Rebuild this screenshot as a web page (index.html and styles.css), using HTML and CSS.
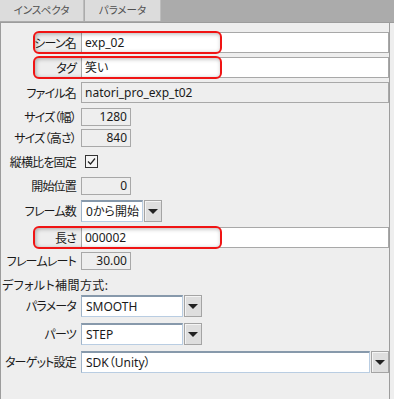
FILE: index.html
```html
<!DOCTYPE html>
<html lang="ja">
<head>
    <meta charset="UTF-8">
    <title>インスペクタ</title>
    <link rel="stylesheet" href="styles.css">
</head>
<body>
    <div class="tabs">
        <div class="tab tab-first">インスペクタ</div>
        <div class="tab tab-second">パラメータ</div>
    </div>

    <div class="panel">
        <div class="form">
            <div class="row r-wide">
                <span class="label">シーン名</span>
                <span class="field">exp_02</span>
                <span class="mark"></span>
            </div>
            <div class="row r-wide">
                <span class="label">タグ</span>
                <span class="field">笑い</span>
                <span class="mark"></span>
            </div>
            <div class="row r-wide r-gap5">
                <span class="label">ファイル名</span>
                <span class="field readonly">natori_pro_exp_t02</span>
            </div>
            <div class="row r-small">
                <span class="label">サイズ（幅）</span>
                <span class="field num">1280</span>
            </div>
            <div class="row r-small r-gap8">
                <span class="label">サイズ（高さ）</span>
                <span class="field num">840</span>
            </div>
            <div class="row r-check">
                <span class="label">縦横比を固定</span>
                <span class="checkbox">
                    <svg width="13" height="13" viewBox="0 0 13 13">
                        <rect x="0.5" y="0.5" width="12" height="12" fill="#f4f4f4" stroke="#333"/>
                        <path d="M3 6.5 L5.5 9 L10 3.5" fill="none" stroke="#222" stroke-width="1.2"/>
                    </svg>
                </span>
            </div>
            <div class="row r-small r-gap5">
                <span class="label">開始位置</span>
                <span class="field num">0</span>
            </div>
            <div class="row r-select r-gap5">
                <span class="label">フレーム数</span>
                <span class="select s-short">0から開始</span>
                <span class="arrow"></span>
            </div>
            <div class="row r-wide">
                <span class="label">長さ</span>
                <span class="field">000002</span>
                <span class="mark"></span>
            </div>
            <div class="row r-small r-gap7">
                <span class="label">フレームレート</span>
                <span class="field num">30.00</span>
            </div>
            <div class="heading">デフォルト補間方式:</div>
            <div class="row r-select r-gap6">
                <span class="label">パラメータ</span>
                <span class="select s-mid">SMOOTH</span>
                <span class="arrow"></span>
            </div>
            <div class="row r-select r-gap6">
                <span class="label">パーツ</span>
                <span class="select s-mid">STEP</span>
                <span class="arrow"></span>
            </div>
            <div class="row r-select">
                <span class="label">ターゲット設定</span>
                <span class="select s-long">SDK（Unity）</span>
                <span class="arrow"></span>
            </div>
        </div>
    </div>
</body>
</html>
```

FILE: styles.css
```css
body {
    margin: 0;
    background: #ababab;
    font-family: "Noto Sans", "Noto Sans CJK JP", sans-serif;
    font-size: 12px;
    font-feature-settings: "palt";
    color: #1a1a1a;
}

/* Tab strip */
.tabs {
    display: flex;
    height: 22px;
}

.tab {
    height: 21px;
    line-height: 21px;
    background: #dcdcdc;
    color: #505050;
    font-size: 10.5px;
    text-align: center;
    border-right: 1px solid #bdbdbd;
}

.tab-first {
    width: 83px;
}

.tab-second {
    width: 75px;
    margin-left: 1px;
}

/* Inspector panel */
.panel {
    background: #eeeeee;
    border-top: 1px solid #9c9c9c;
    height: 376px;
}

.form {
    width: 390px;
    height: 100%;
    box-sizing: border-box;
    padding-top: 9px;
    border-left: 1px solid #9c9c9c;
    border-right: 1px solid #9c9c9c;
}

.row {
    display: flex;
    align-items: center;
    position: relative;
    margin-bottom: 4px;
}

.r-wide { height: 21px; }
.r-small { height: 18px; margin-bottom: 3px; }
.r-select { height: 22px; }
.r-check { height: 13px; margin-top: 5px; margin-bottom: 9px; }

.r-gap5 { margin-bottom: 5px; }
.r-gap6 { margin-bottom: 6px; }
.r-gap7 { margin-bottom: 7px; }
.r-gap8 { margin-bottom: 8px; }

.label {
    width: 80px;
    flex: none;
    box-sizing: border-box;
    padding-right: 5px;
    text-align: right;
    white-space: nowrap;
    letter-spacing: -0.8px;
}

.field {
    flex: 1;
    height: 100%;
    box-sizing: border-box;
    border: 1px solid #a8a8a8;
    background: #ffffff;
    padding: 0 3px;
    line-height: 19px;
    white-space: nowrap;
}

.field.readonly {
    background: #eeeeee;
}

.field.num {
    flex: none;
    width: 50px;
    text-align: right;
    line-height: 16px;
    background: #eeeeee;
}

.checkbox {
    margin-left: 4px;
    display: flex;
}

.heading {
    height: 18px;
    line-height: 18px;
    padding-left: 1px;
    letter-spacing: 0.4px;
}

/* Combo boxes */
.select {
    height: 100%;
    box-sizing: border-box;
    background: #ffffff;
    border: 1px solid #b9cde2;
    border-top: 2px solid #8799ab;
    border-left-color: #9fb3c8;
    padding: 0 4px;
    line-height: 19px;
    white-space: nowrap;
}

.s-short { width: 62px; }
.s-mid { width: 102px; }
.s-long { width: 290px; }

.arrow {
    width: 18px;
    height: 100%;
    margin-left: 1px;
    box-sizing: border-box;
    background: #dedede;
    border: 1px solid #a4a4a4;
    box-shadow: inset 1px 1px 0 #f4f4f4;
    position: relative;
}

.arrow::after {
    content: "";
    position: absolute;
    left: 3px;
    top: 8px;
    border-left: 5px solid transparent;
    border-right: 5px solid transparent;
    border-top: 5px solid #222;
}

/* Red highlight frames drawn over rows */
.mark {
    position: absolute;
    left: 32px;
    top: -1px;
    width: 189px;
    height: 23px;
    box-sizing: border-box;
    border: 2px solid #f01414;
    border-radius: 6px;
    box-shadow: inset 1px 1px 4px rgba(0, 0, 0, 0.3);
    pointer-events: none;
}
```
